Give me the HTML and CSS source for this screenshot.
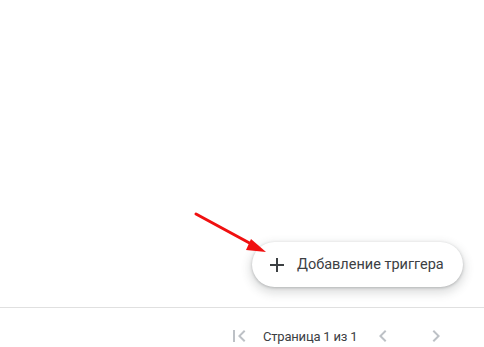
FILE: index.html
```html
<!DOCTYPE html>
<html lang="ru">
	<head>
		<meta charset="UTF-8">
		<title>Триггеры</title>
		<link rel="stylesheet" href="styles.css">
	</head>
	<body>
		<div class="page">
			<div class="content">
				<button class="fab">
					<svg class="fabIcon" width="24" height="24" viewBox="0 0 24 24"><path d="M19 13h-6v6h-2v-6H5v-2h6V5h2v6h6v2z" fill="#3c4043"/></svg>
					<span>Добавление триггера</span>
				</button>
			</div>
			<div class="footer">
				<span class="navBtn">
					<svg width="24" height="24" viewBox="0 0 24 24"><path d="M18.41 16.59L13.82 12l4.59-4.59L17 6l-6 6 6 6zM6 6h2v12H6z" fill="#bdc1c6"/></svg>
				</span>
				<span class="pageLabel">Страница 1 из 1</span>
				<span class="navBtn prev">
					<svg width="24" height="24" viewBox="0 0 24 24"><path d="M15.41 7.41L14 6l-6 6 6 6 1.41-1.41L10.83 12z" fill="#bdc1c6"/></svg>
				</span>
				<span class="navBtn next">
					<svg width="24" height="24" viewBox="0 0 24 24"><path d="M10 6L8.59 7.41 13.17 12l-4.58 4.59L10 18l6-6z" fill="#bdc1c6"/></svg>
				</span>
			</div>
		</div>
		<svg class="pointer" width="484" height="347" viewBox="0 0 484 347">
			<line x1="196" y1="214" x2="255" y2="246" stroke="#f01010" stroke-width="3" stroke-linecap="round"/>
			<polygon points="266,252 251,239 246,250" fill="#f01010"/>
		</svg>
	</body>
</html>
```

FILE: styles.css
```css
html, body {
	margin: 0;
	height: 347px;
	overflow: hidden;
	background: #fff;
}
.page {
	height: 364px;
	display: flex;
	flex-direction: column;
	font-family: 'Roboto', 'Liberation Sans', sans-serif;
}
.content {
	flex: 1;
	display: flex;
	justify-content: flex-end;
	align-items: flex-end;
	padding: 0 21px 20px 0;
}
.fab {
	display: flex;
	align-items: center;
	height: 45px;
	width: 211px;
	padding: 0 0 0 13px;
	border: none;
	border-radius: 23px;
	background: #fff;
	font-family: inherit;
	font-size: 14.5px;
	font-weight: 400;
	color: #3c4043;
	letter-spacing: 0;
	box-shadow: 0 1px 3px rgba(60, 64, 67, 0.3), 0 4px 8px 3px rgba(60, 64, 67, 0.15);
}
.fabIcon {
	margin-right: 8px;
}
.footer {
	flex: 0 0 56px;
	display: flex;
	align-items: center;
	padding-left: 227px;
	border-top: 1px solid #e0e0e0;
	font-size: 13px;
	letter-spacing: -0.2px;
	color: #3c4043;
}
.navBtn {
	display: flex;
	width: 24px;
	height: 24px;
}
.pageLabel {
	margin-left: 12px;
	width: 108px;
}
.next {
	margin-left: 29px;
}
.pointer {
	position: absolute;
	left: 0;
	top: 0;
	pointer-events: none;
}
```
